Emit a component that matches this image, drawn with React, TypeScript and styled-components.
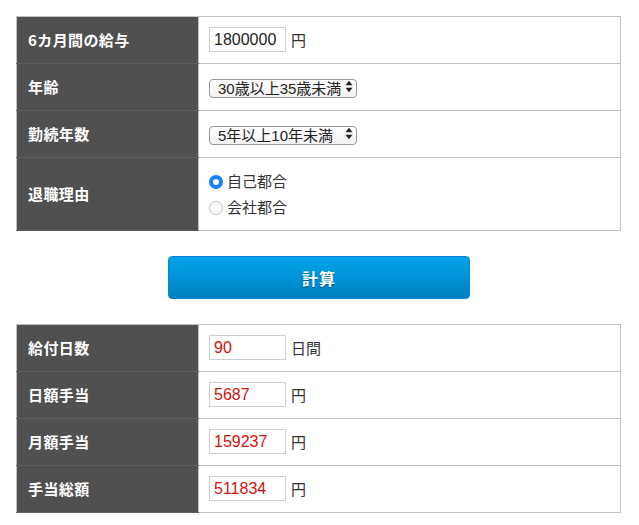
import styled, { createGlobalStyle } from "styled-components";

const GlobalStyle = createGlobalStyle`
  html, body {
    margin: 0;
    padding: 0;
    background: #ffffff;
    overflow: hidden;
  }
  body {
    font-family: "Noto Sans CJK JP", "Noto Sans", sans-serif;
    color: #333333;
  }
`;

const Page = styled.div`
  box-sizing: border-box;
  width: 639px;
  padding: 16px 18px 0 16px;
  display: flex;
  flex-direction: column;
  gap: 25px;
`;

const Table = styled.table`
  width: 605px;
  border-collapse: collapse;
  table-layout: fixed;
  border: 1px solid #c2c2c2;
`;

const Row = styled.tr<{ $tall?: boolean }>`
  height: ${(p) => (p.$tall ? "73px" : "47px")};
`;

const Th = styled.th`
  box-sizing: border-box;
  width: 182px;
  background: #505050;
  color: #ffffff;
  font-size: 15px;
  font-weight: 700;
  text-align: left;
  padding: 0 0 2px 11px;
  border-bottom: 1px solid #5f5f5f;
  letter-spacing: 0.4px;
`;

const Td = styled.td`
  background: #ffffff;
  border-bottom: 1px solid #c2c2c2;
  border-left: 1px solid #c2c2c2;
  padding: 0 0 1px 10px;
  font-size: 15px;
`;

const Field = styled.div`
  display: flex;
  align-items: center;
  gap: 5px;
`;

const NumberBox = styled.input<{ $result?: boolean }>`
  width: 77px;
  height: 25px;
  box-sizing: border-box;
  border: 1px solid #cfcfcf;
  padding: 0 4px;
  font-family: "Liberation Sans", "Noto Sans", sans-serif;
  font-size: 16px;
  color: ${(p) => (p.$result ? "#d0120c" : "#222222")};
  background: #ffffff;
  outline: none;
`;

const Unit = styled.span`
  font-size: 15px;
  color: #333333;
`;

const SelectWrap = styled.div`
  position: relative;
  width: 148px;
  height: 19px;
`;

const Select = styled.select`
  appearance: none;
  -webkit-appearance: none;
  width: 148px;
  height: 19px;
  box-sizing: border-box;
  border: 1px solid #9a9a9a;
  border-radius: 4px;
  background: linear-gradient(#ffffff, #f2f2f2);
  font-family: "Liberation Sans", "Noto Sans CJK JP", sans-serif;
  font-size: 15px;
  line-height: 17px;
  color: #222222;
  padding: 0 0 0 8px;
  margin: 0;
  outline: none;
`;

const Arrows = styled.span`
  position: absolute;
  right: 4px;
  top: 3px;
  pointer-events: none;
  display: flex;
`;

const RadioGroup = styled.div`
  display: flex;
  flex-direction: column;
  gap: 6px;
`;

const RadioLabel = styled.label`
  display: flex;
  align-items: center;
  gap: 4px;
  font-size: 15px;
  line-height: 20px;
  color: #333333;
`;

const Radio = styled.input`
  appearance: none;
  -webkit-appearance: none;
  width: 14px;
  height: 14px;
  margin: 3px 0 0 0;
  border-radius: 50%;
  border: 1px solid #b8b8b8;
  background: #ffffff;
  box-sizing: border-box;
  &:checked {
    border: 4px solid #1a82f7;
    background: #ffffff;
  }
`;

const ButtonRow = styled.div`
  display: flex;
  justify-content: center;
`;

const CalcButton = styled.button`
  width: 302px;
  height: 43px;
  border: 1px solid #0a86c8;
  border-radius: 4px;
  background: linear-gradient(#00a4ea, #0080c2);
  color: #ffffff;
  font-family: "Noto Sans CJK JP", sans-serif;
  font-size: 16px;
  font-weight: 700;
  letter-spacing: 1px;
  text-shadow: 0 1px 1px rgba(0, 0, 0, 0.35);
  margin-left: 1px;
`;

function SelectArrows() {
  return (
    <Arrows>
      <svg width="8" height="13" viewBox="0 0 8 13">
        <path d="M4 0.8 L7.5 5.3 L0.5 5.3 Z" fill="#222" />
        <path d="M4 12.2 L7.5 7.7 L0.5 7.7 Z" fill="#222" />
      </svg>
    </Arrows>
  );
}

export default function App() {
  return (
    <>
      <GlobalStyle />
      <Page>
        <Table>
          <tbody>
            <Row>
              <Th>6カ月間の給与</Th>
              <Td>
                <Field>
                  <NumberBox defaultValue="1800000" />
                  <Unit>円</Unit>
                </Field>
              </Td>
            </Row>
            <Row>
              <Th>年齢</Th>
              <Td>
                <SelectWrap>
                  <Select defaultValue="30-35">
                    <option value="30-35">30歳以上35歳未満</option>
                  </Select>
                  <SelectArrows />
                </SelectWrap>
              </Td>
            </Row>
            <Row>
              <Th>勤続年数</Th>
              <Td>
                <SelectWrap>
                  <Select defaultValue="5-10">
                    <option value="5-10">5年以上10年未満</option>
                  </Select>
                  <SelectArrows />
                </SelectWrap>
              </Td>
            </Row>
            <Row $tall>
              <Th>退職理由</Th>
              <Td>
                <RadioGroup>
                  <RadioLabel>
                    <Radio type="radio" name="reason" defaultChecked />
                    自己都合
                  </RadioLabel>
                  <RadioLabel>
                    <Radio type="radio" name="reason" />
                    会社都合
                  </RadioLabel>
                </RadioGroup>
              </Td>
            </Row>
          </tbody>
        </Table>

        <ButtonRow>
          <CalcButton>計算</CalcButton>
        </ButtonRow>

        <Table>
          <tbody>
            <Row>
              <Th>給付日数</Th>
              <Td>
                <Field>
                  <NumberBox $result defaultValue="90" />
                  <Unit>日間</Unit>
                </Field>
              </Td>
            </Row>
            <Row>
              <Th>日額手当</Th>
              <Td>
                <Field>
                  <NumberBox $result defaultValue="5687" />
                  <Unit>円</Unit>
                </Field>
              </Td>
            </Row>
            <Row>
              <Th>月額手当</Th>
              <Td>
                <Field>
                  <NumberBox $result defaultValue="159237" />
                  <Unit>円</Unit>
                </Field>
              </Td>
            </Row>
            <Row>
              <Th>手当総額</Th>
              <Td>
                <Field>
                  <NumberBox $result defaultValue="511834" />
                  <Unit>円</Unit>
                </Field>
              </Td>
            </Row>
          </tbody>
        </Table>
      </Page>
    </>
  );
}
